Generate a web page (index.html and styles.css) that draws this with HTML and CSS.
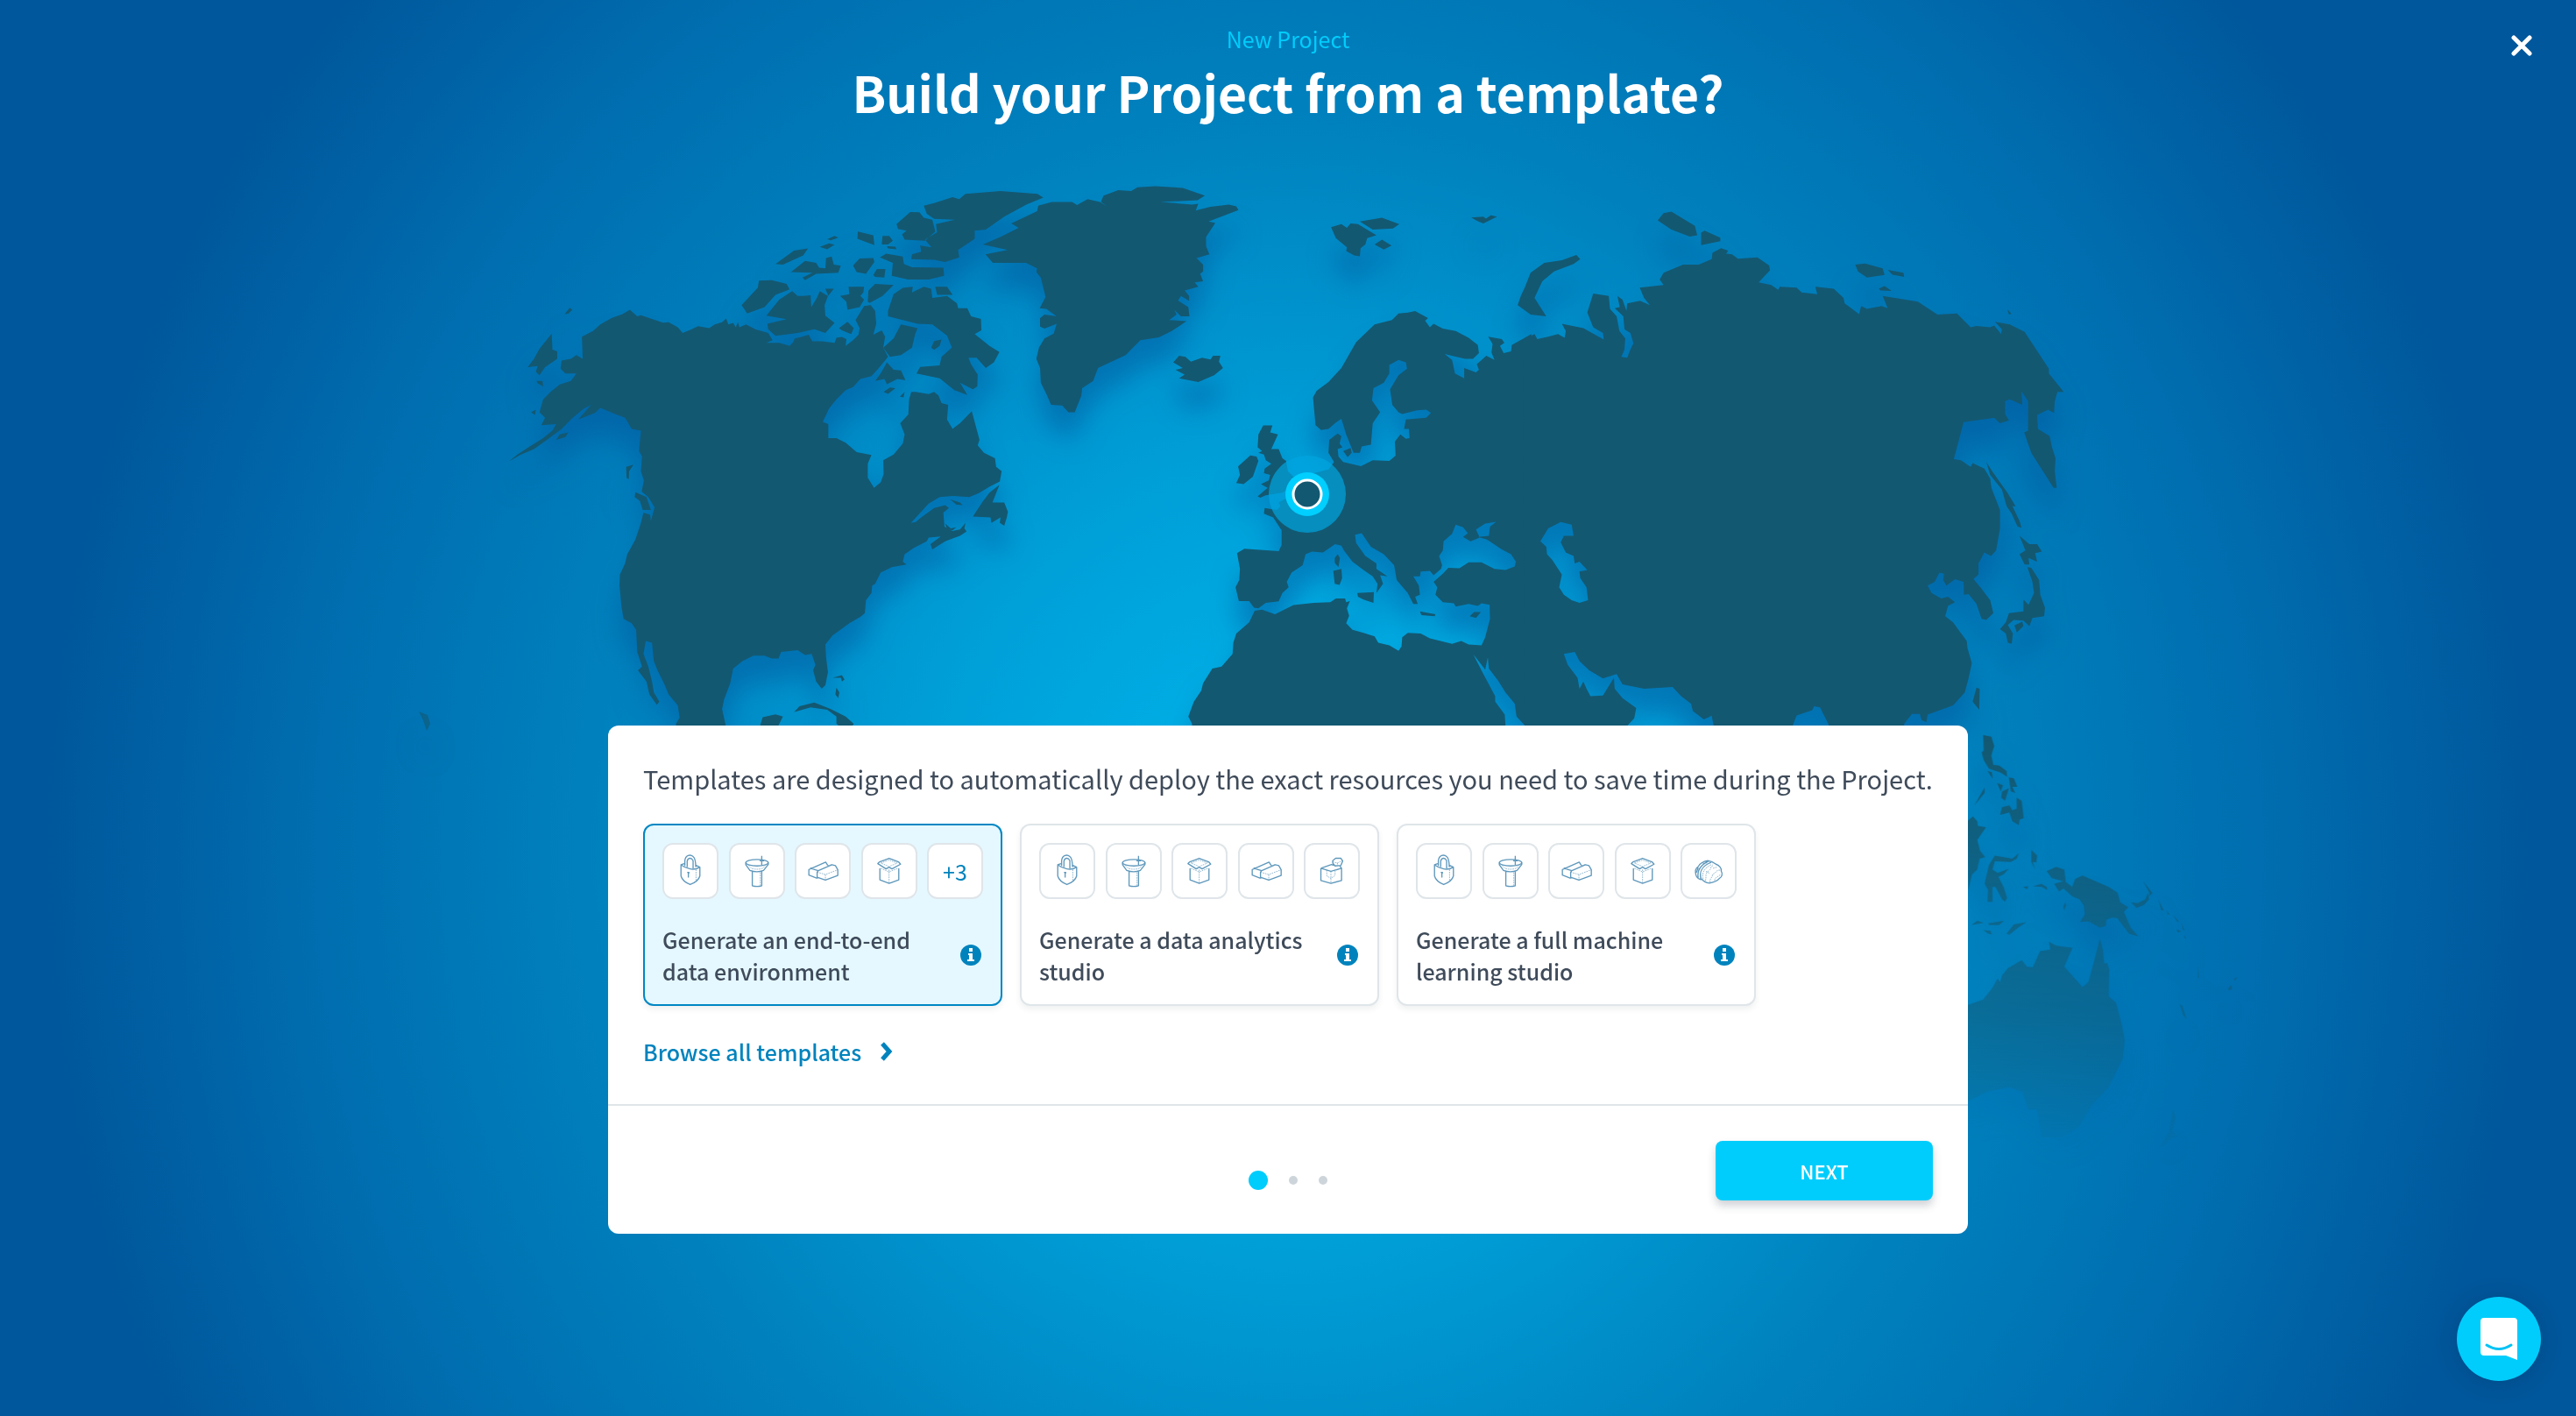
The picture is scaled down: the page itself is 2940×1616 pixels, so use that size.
FILE: index.html
```html
<!DOCTYPE html>
<html lang="en">
<head>
<meta charset="utf-8">
<meta name="viewport" content="width=device-width, initial-scale=1">
<title>New Project</title>
<link rel="stylesheet" href="styles.css">
</head>
<body>
<svg class="sprite" aria-hidden="true">
  <symbol id="i-lock" viewBox="0 0 190 190">
    <path d="M63 74V112Q68 130 94 141Q122 130 127 112V82Q110 92 94 88Q76 84 63 74L74 70M114 76L127 82M76 78V60C78 42 94 37 104 46C112 52 113 62 113 82M84 82V62C86 50 98 48 104 60V86M88 98V117M84 100L92 101"/>
    <path class="faint" d="M114 90V130"/>
  </symbol>
  <symbol id="i-funnel" viewBox="0 0 190 190">
    <ellipse cx="95" cy="67" rx="38" ry="11"/>
    <path d="M57 67V74L71 93Q95 102 117 93L133 73V67M79 97V145Q95 150 111 145V97M111 44V74M104 60H119"/>
    <path class="faint" d="M66 76L76 86Q95 92 114 86L124 76M106 100V144"/>
  </symbol>
  <symbol id="i-box" viewBox="0 0 190 190">
    <path d="M62 64L94 52L126 64L133 72L104 88L94 82L84 88L56 70L62 64M63 86V125L94 137L127 125V86"/>
    <path class="faint" d="M66 68L94 58L122 68L94 80L66 68M94 90V137M66 86L94 98L124 86"/>
  </symbol>
  <symbol id="i-bricks" viewBox="0 0 190 190">
    <path d="M76 120L48 109V90L105 65L112 76M76 120V99L80 94L126 74L138 77L146 91V110L104 126L76 116M80 94L52 86"/>
    <path class="faint" d="M76 99L104 107L146 91M104 107V126M112 76L126 74"/>
  </symbol>
  <symbol id="i-cube" viewBox="0 0 190 190">
    <path d="M58 86V127L92 137L128 127V86M58 86L94 73L102 76M58 86L92 96L128 86L122 78M98 60L108 52L126 52L132 61L126 76L106 78L98 68Z"/>
    <path class="faint" d="M92 96V137M78 92V112L92 120L106 110V90M98 64L114 68L130 60M114 68V76"/>
  </symbol>
  <symbol id="i-brain" viewBox="0 0 190 190">
    <path d="M52 108C48 94 54 84 60 80C66 68 82 62 92 60C102 62 112 66 120 72C132 76 140 86 138 96C144 104 140 116 132 120C124 130 110 134 98 136C86 134 78 130 74 124C64 124 54 118 52 108M60 118C56 96 66 76 94 62M70 124C62 100 72 78 104 66M76 70L90 66M54 100L60 84"/>
    <path class="faint" d="M76 122C72 100 80 84 108 72M84 128C90 112 80 104 96 94C106 88 98 80 112 76M100 134C98 118 110 118 108 106C122 104 116 92 134 92M116 128C114 116 128 116 136 106M86 96L100 104M110 86L124 82"/>
  </symbol>
  <symbol id="i-info" viewBox="0 0 24 24">
    <circle cx="12" cy="12" r="12"/>
    <path class="mark" d="M10 4h4v4h-4zM9 10h5v7h2v2H8v-2h2v-5H9z"/>
  </symbol>
</svg>

<svg class="map" viewBox="0 0 2940 1616" preserveAspectRatio="xMidYMid slice" aria-hidden="true">
  <defs>
    <linearGradient id="fade" gradientUnits="userSpaceOnUse" x1="0" y1="0" x2="0" y2="1616">
      <stop offset="0" stop-color="#fff"/>
      <stop offset=".52" stop-color="#fff"/>
      <stop offset=".64" stop-color="#aaa"/>
      <stop offset=".72" stop-color="#777"/>
      <stop offset=".83" stop-color="#000"/>
    </linearGradient>
    <mask id="fade-mask" maskUnits="userSpaceOnUse" x="0" y="0" width="2940" height="1616">
      <rect width="2940" height="1616" fill="url(#fade)"/>
    </mask>
    <filter id="drop" filterUnits="userSpaceOnUse" x="0" y="0" width="2940" height="1616" color-interpolation-filters="sRGB">
      <feDropShadow dx="0" dy="30" stdDeviation="14" flood-color="#02559c" flood-opacity=".5"/>
    </filter>
  </defs>
  <g mask="url(#fade-mask)">
  <g filter="url(#drop)" fill="#135871" fill-rule="evenodd">
    <!-- North America -->
    <g transform="translate(540 180) scale(.42092)">
      <path d="M295 485L325 470 345 452 375 435 405 424 425 412 445 430 455 427 485 437 515 447 530 446 555 460 568 475 590 466 610 457 640 462 655 452 675 446 686 436 692 452 705 448 712 460 718 446 722 460 740 452 765 465 800 475 812 495 795 502 830 502 858 510 868 500 872 490 890 486 910 480 915 490 920 498 945 498 980 502 985 488 1000 486 1012 492 1010 510 1030 495 1045 480 1048 462 1037 440 1060 402 1078 400 1090 415 1093 450 1085 480 1108 468 1117 485 1112 515 1125 540 1100 570 1080 592 1050 600 1030 622 1010 630 985 655 965 680 948 716 963 722 963 760 985 760 1010 773 1040 798 1080 806 1070 830 1070 868 1087 895 1105 880 1113 858 1112 820 1140 805 1165 775 1170 750 1158 720 1180 696 1182 655 1188 635 1200 635 1235 641 1250 635 1262 645 1270 665 1288 670 1285 710 1300 735 1320 720 1352 687 1365 735 1373 765 1368 780 1385 800 1415 815 1418 838 1433 850 1428 878 1400 892 1370 910 1345 920 1300 917 1265 920 1235 938 1210 965 1187 990 1200 988 1215 975 1250 950 1280 942 1290 950 1275 962 1278 1000 1300 1012 1320 1008 1335 990 1332 1005 1338 1013 1320 1025 1280 1040 1245 1062 1240 1048 1268 1027 1235 1030 1230 1040 1195 1058 1170 1075 1165 1095 1175 1103 1135 1110 1105 1125 1090 1155 1082 1160 1080 1180 1065 1200 1062 1235 1050 1245 1020 1262 975 1295 955 1320 957 1355 962 1395 955 1430 945 1440 930 1420 922 1390 928 1375 918 1345 900 1348 880 1335 835 1340 828 1358 810 1358 790 1350 760 1350 730 1365 705 1385 697 1425 680 1470 675 1495 685 1540 690 1640 555 1600 550 1535 560 1518 555 1485 530 1455 520 1430 500 1390 490 1365 485 1315 468 1310 462 1345 475 1380 485 1420 490 1450 505 1475 498 1483 478 1455 470 1420 447 1390 458 1380 445 1340 442 1280 430 1262 408 1250 402 1215 397 1160 398 1130 412 1100 418 1075 440 1035 455 990 462 962 480 968 482 985 492 948 475 920 457 905 463 875 455 850 458 810 450 795 455 740 430 735 412 705 385 695 345 678 330 692 285 710 320 670 300 680 270 705 240 735 200 765 165 790 130 805 97 823 120 805 150 785 190 760 215 740 225 722 185 725 195 705 180 690 190 655 210 635 235 615 265 605 280 585 250 585 237 572 240 550 265 545 280 535 297 545Z"/>
      <path d="M213 477L215 520 228 525 228 545 195 568 180 590 170 580 175 565 148 568 165 545 180 518ZM248 424L262 407 269 412 258 423ZM172 605L188 605 190 620 175 612ZM157 690L170 683 168 697ZM225 765L235 750 258 745 250 757ZM415 838L435 832 423 850 422 872 416 868ZM440 907L470 920 482 955 460 955 452 930 438 920Z"/>
      <path d="M728 400L772 352 775 333 810 332 850 342 858 357 820 372 790 405 743 422ZM795 428L830 385 865 362 880 375 895 375 915 373 917 405 932 380 940 362 962 375 953 400 955 428 980 448 955 475 925 465 880 475 820 483 800 465 798 450 850 438ZM820 288L870 252 908 246 895 265 840 290ZM862 310L900 280 930 285 938 298 955 300 957 272 972 268 978 290 997 293 990 312 930 315 900 332 893 325 920 312ZM940 242L965 232 980 236 960 248ZM960 221L980 212 990 217 970 224ZM955 355L978 355 963 374ZM995 375L1020 370 1018 350 1060 350 1058 365 1050 375 1060 385 1048 405 1015 412 1012 390ZM1030 292L1048 273 1085 272 1088 283 1065 315 1040 310ZM1043 200L1085 210 1088 237 1042 220ZM1110 212L1128 212 1138 225 1125 235 1108 235ZM1122 240L1145 241 1148 248 1125 246ZM1085 318L1095 302 1118 302 1115 325 1090 323ZM1103 270L1120 260 1165 268 1168 288 1190 297 1275 298 1277 320 1235 330 1180 330 1135 320 1138 285ZM1070 390L1072 360 1090 342 1140 345 1110 375 1075 394ZM992 462L1015 445 1032 462 1025 478 1000 468Z"/>
      <path d="M1125 415L1140 370 1165 353 1192 350 1190 365 1222 350 1242 355 1245 380 1285 375 1312 395 1315 408 1340 408 1350 430 1377 437 1378 468 1360 478 1400 510 1427 527 1412 555 1390 570 1365 542 1343 542 1350 560 1368 588 1367 620 1355 628 1320 610 1340 643 1305 630 1265 598 1202 585 1212 567 1265 563 1270 540 1298 515 1285 482 1245 452 1205 450 1125 430ZM1112 515L1140 490 1160 452 1205 462 1198 480 1190 515 1160 535 1130 540ZM1242 515L1250 497 1270 493 1265 510 1250 521ZM1090 605L1105 585 1122 555 1140 575 1160 577 1172 603 1150 600 1122 614 1115 600ZM1113 635L1130 623 1145 625 1125 640ZM1157 648L1170 635 1167 650ZM1253 350L1285 350 1300 372 1258 372Z"/>
      <path d="M1148 180L1185 147 1210 148 1222 163 1245 168 1253 200 1225 225 1170 222 1163 208 1175 198 1152 193ZM1222 130L1250 123 1300 107 1318 112 1335 98 1430 90 1530 98 1546 108 1500 127 1440 160 1390 195 1360 198 1360 220 1315 250 1318 270 1280 283 1250 277 1188 275 1190 262 1215 255 1212 238 1243 243 1225 222 1258 202 1255 180 1308 168 1250 166 1230 152Z"/>
      <path d="M1355 973L1380 935 1400 908 1427 887 1408 935 1440 935 1450 960 1447 975 1440 998 1428 990 1430 975 1405 990 1403 975ZM1293 926L1320 935 1327 942 1310 940ZM1280 992L1295 1005 1310 1002 1300 1010 1285 1007ZM870 1503L885 1487 925 1477 970 1495 1010 1515 1032 1535 1015 1560 985 1535 985 1515 960 1497 915 1490ZM778 1540L785 1517 820 1509 840 1515 825 1545ZM975 1410L1000 1403 1007 1415 1000 1420 997 1410ZM985 1437L993 1450 990 1465 982 1455Z"/>
    </g>
    <!-- Greenland, Europe and Africa -->
    <g transform="translate(1150 180) scale(.42092)">
      <path d="M10 178L80 145 83 130 120 120 175 120 188 128 217 112 250 120 270 132 253 120 260 103 300 88 335 90 352 80 400 77 475 82 535 103 515 115 415 120 500 127 517 125 510 143 550 133 600 127 620 132 626 142 545 173 563 177 538 215 538 240 547 262 512 272 530 290 530 308 522 315 530 335 507 338 517 350 480 360 492 375 492 388 470 375 462 387 490 405 493 430 470 430 452 412 458 425 438 440 485 443 445 470 410 487 360 495 320 535 245 570 232 605 202 625 200 645 182 690 165 690 148 672 118 670 105 640 90 610 88 570 78 545 85 515 100 490 125 477 133 450 100 463 88 458 88 435 100 425 133 430 105 410 87 408 103 378 90 325 78 310 80 300 50 285 0 285 -40 285 -60 262 0 250 -67 235 -20 215 30 190Z"/>
      <path d="M449 555L465 537 482 540 497 553 527 542 550 547 557 537 577 537 573 553 584 570 560 590 517 608 465 598 480 588 455 575 475 570ZM877 188L905 180 920 190 930 178 950 180 1000 210 975 218 970 235 957 245 955 267 940 265 918 253 920 243 890 218ZM955 173L1015 163 1062 180 1045 192 990 195ZM995 235L1015 222 1041 238 1020 249ZM1257 162L1290 160 1297 165 1310 156 1327 160 1290 178 1275 172Z"/>
      <path d="M693 726L718 726 712 745 733 750 715 790 735 790 745 815 755 822 760 850 780 870 775 890 745 908 700 915 685 922 678 918 705 895 687 885 708 875 712 860 695 855 697 843 715 830 700 820 695 805 680 800 690 795 678 785 680 750ZM625 837L658 807 675 810 680 822 665 865 640 885 620 882 630 860ZM887 1085L895 1075 901 1085 897 1110 887 1098ZM883 1120L905 1115 907 1140 900 1158 887 1155ZM948 1180L993 1178 992 1207 965 1198 950 1190ZM1118 1230L1160 1238 1158 1243 1122 1240ZM1253 1243L1265 1232 1283 1232 1270 1248ZM910 795L930 787 933 800 922 812Z"/>
      <path d="M828 650L838 632 870 608 905 570 945 500 995 452 1042 440 1060 422 1085 420 1105 416 1140 435 1132 442 1145 460 1155 450 1180 463 1215 470 1250 488 1275 508 1278 530 1262 545 1240 545 1185 532 1205 548 1213 585 1238 598 1238 570 1270 582 1278 575 1272 560 1298 537 1320 548 1312 528 1315 505 1303 485 1340 492 1347 502 1335 510 1345 530 1365 525 1367 508 1420 478V1640H1403V1540L1380 1515 1375 1480 1350 1450 1330 1418 1305 1385 1302 1355 1295 1388 1263 1347 1290 1400 1322 1460 1322 1475 1348 1510 1350 1540V1640H500L500 1535 490 1515 505 1475 525 1445 530 1425 555 1385 580 1380 610 1345 612 1315 620 1290 655 1260 670 1228 690 1225 725 1238 775 1213 830 1207 875 1205 890 1195 915 1195 918 1205 928 1202 920 1222 926 1242 918 1262 935 1280 965 1288 995 1298 1005 1315 1035 1322 1060 1337 1068 1325 1070 1300 1085 1288 1120 1290 1145 1303 1205 1318 1230 1310 1250 1320 1285 1322 1295 1300 1308 1250 1307 1212 1285 1208 1275 1215 1250 1210 1215 1217 1210 1208 1180 1205 1160 1185 1165 1165 1155 1150 1180 1128 1195 1112 1225 1113 1250 1097 1285 1097 1320 1115 1350 1118 1375 1108 1378 1095 1365 1075 1340 1062 1300 1035 1275 1028 1305 1025 1308 1000 1325 987 1295 992 1270 1008 1280 1030 1255 1040 1235 1028 1248 1018 1235 1002 1215 995 1205 1020 1182 1040 1180 1065 1170 1080 1178 1105 1175 1115 1155 1132 1145 1120 1120 1122 1118 1135 1100 1135 1115 1160 1118 1185 1105 1190 1112 1210 1100 1210 1085 1180 1055 1145 1048 1105 1020 1075 985 1055 960 1018 942 1022 945 1045 970 1080 1000 1100 1000 1115 1030 1135 1010 1132 1018 1155 1000 1180 1003 1155 990 1135 965 1118 935 1095 912 1065 905 1052 888 1048 855 1070 825 1068 808 1075 800 1105 770 1125 757 1150 762 1165 745 1180 735 1203 700 1207 680 1222 668 1220 655 1202 627 1202 618 1165 628 1145 630 1115 622 1072 642 1060 735 1067 743 1050 743 1010 720 975 695 965 697 950 730 955 740 945 735 935 770 915 790 885 830 855 870 845 885 825 870 800 872 765 895 748 905 755 900 775 908 785 895 790 897 810 910 825 930 830 958 836 990 820 1035 822 1052 808 1050 770 1065 750 1080 762 1090 760 1088 735 1075 735 1080 710 1135 705 1148 692 1135 683 1110 685 1070 695 1060 690 1043 670 1037 628 1060 590 1083 572 1080 555 1060 548 1035 562 1035 585 1020 610 992 625 988 658 1010 690 990 720 985 778 960 783 955 800 938 800 918 750 905 708 890 718 870 735 850 738 835 725Z"/>
    </g>
    <!-- Asia -->
    <g transform="translate(1700 180) scale(.44643 .42092)">
      <path d="M85 495L115 478 122 492 150 485 175 478 192 488 195 470 185 450 240 462 292 493 290 475 265 460 250 420 265 368 305 375 308 410 325 430 332 470 347 490 345 520 337 540 352 542 360 520 368 503 360 475 345 465 342 430 320 408 333 405 327 375 340 385 350 415 352 395 385 388 410 400 395 380 384 352 445 345 435 330 445 312 495 290 535 290 568 275 570 258 592 245 610 252 605 260 620 262 635 274 685 270 715 292 717 305 688 338 720 345 738 358 742 350 785 352 798 365 838 370 833 350 880 355 905 380 908 395 945 424 950 402 965 410 1002 402 1018 408 1005 375 1095 390 1145 425 1195 422 1230 460 1245 456 1280 460 1290 455 1308 478 1310 465 1292 445 1330 452 1368 472 1430 572 1430 585 1468 635 1452 635 1445 660 1443 692 1428 683 1400 697 1402 735 1432 755 1438 785 1447 815 1445 850 1450 895 1442 895 1385 800 1367 745 1377 740 1377 660 1360 633 1362 670 1330 655 1318 660 1318 695 1328 712 1305 720 1290 705 1260 710 1212 717 1187 817 1205 820 1230 838 1235 828 1265 843 1280 870 1283 895 1305 955 1305 1005 1295 1065 1282 1080 1265 1070 1250 1100 1250 1130 1237 1142 1255 1165 1280 1200 1288 1235 1270 1253 1258 1250 1245 1210 1225 1183 1213 1185 1212 1150 1190 1143 1168 1160 1160 1145 1162 1128 1150 1125 1138 1150 1120 1160 1130 1180 1155 1195 1172 1190 1190 1205 1172 1215 1165 1243 1185 1260 1220 1310 1222 1330 1233 1370 1225 1410 1215 1450 1185 1485 1120 1510 1117 1530 1105 1525 1100 1508 1080 1508 1060 1535V1640H865L867 1537 845 1490 830 1487 825 1498 785 1512 775 1540V1640H573V1540L568 1513 548 1523 520 1500 515 1480 490 1460 468 1435 395 1440 340 1428 325 1400 290 1412 255 1390 230 1365 218 1340 190 1345 200 1375 225 1410 230 1440 240 1420 248 1440 258 1460 290 1458 318 1410 320 1440 340 1465 375 1492 370 1520 352 1540V1640H90ZM182 988L210 995 215 1025 190 1025 182 1043 195 1070 215 1080 218 1100 230 1095 250 1118 230 1122 232 1140 248 1165 252 1200 230 1207 210 1200 190 1185 178 1165 185 1130 160 1090 147 1075 145 1055 130 1040 150 1005Z"/>
      <path d="M72 400L80 375 90 352 105 312 140 285 185 278 222 264 232 275 215 288 165 308 135 335 115 380 145 430 105 425ZM430 170L445 150 465 146 525 185 531 210 512 214 465 195ZM541 203L550 198 590 217 590 226 541 237ZM935 290L960 287 1005 300 1010 318 965 325 942 308ZM1018 304L1058 312 1060 323 1030 317ZM995 355L1010 348 1028 361 1000 360ZM1324 411L1334 423 1328 425ZM1270 825L1285 850 1325 910 1345 945 1337 945 1355 985 1360 1003 1350 1000 1335 965 1322 945 1310 900 1280 860ZM1355 1025L1380 1048 1400 1048 1412 1068 1395 1072 1400 1095 1378 1085 1380 1103 1368 1103 1355 1075 1370 1065ZM1375 1110L1385 1112 1405 1145 1408 1185 1420 1220 1418 1243 1388 1248 1380 1270 1365 1255 1340 1253 1325 1267 1338 1290 1335 1318 1325 1315 1320 1290 1305 1278 1320 1260 1328 1235 1365 1230 1365 1198 1378 1212 1392 1180 1388 1150ZM1342 1268L1362 1258 1365 1270 1348 1287ZM1245 1437L1253 1440 1252 1497 1235 1475Z"/>
    </g>
    <!-- South-east Asia and Oceania -->
    <g transform="translate(2100 780) scale(.33333 .35714)">
      <path d="M490 165L518 170 528 200 518 230 525 260 545 262 570 280 572 298 550 285 510 272 492 245 485 220 492 215ZM505 280L520 283 523 305ZM578 300L595 303 607 330 590 330 600 350 585 345ZM538 318L558 325 550 345ZM555 345L578 335 565 375 552 365ZM495 332L495 350 460 390ZM548 420L555 395 580 390 590 405 605 400 605 365 622 375 629 430 615 435 612 453 590 440 580 412ZM435 440L455 425 470 440 472 455 500 460 470 500 480 535 497 555 478 560 470 595 452 610 440 660ZM530 550L590 560 612 542 605 560 585 570 530 568 522 595 540 605 578 592 560 610 542 618 560 650 572 685 565 698 555 690 532 650 522 650 522 698 505 698 507 660 495 640 510 580ZM655 532L675 550 672 572 660 570 668 595 655 570ZM627 650L645 648 640 658ZM660 648L690 640 708 650 710 660 690 650ZM450 772L470 758 492 765ZM508 766L562 758 545 772 510 772ZM490 788L515 790 520 802 508 800ZM570 800L595 770 638 763 610 780 580 803ZM765 712L772 700 774 710 767 725Z"/>
      <path d="M708 600L740 586 768 595 773 635 795 650 805 625 830 614 870 630 920 650 950 668 960 700 987 715 972 730 995 780 1022 808 990 800 965 770 950 750 930 748 912 755 910 775 890 780 850 760 822 762 838 738 835 710 820 690 795 680 765 655 750 665 733 640 765 632 725 622ZM1038 632L1070 670 1058 680 1060 670ZM997 700L1020 702 1045 690 1055 668 1058 690 1040 708 1015 717ZM1090 690L1108 725 1100 725ZM1118 725L1128 738 1122 738ZM1140 738L1160 760 1155 762ZM1168 762L1180 790 1174 788ZM1152 785L1168 792 1157 796ZM1178 805L1186 814 1180 814ZM1226 900L1229 942 1225 940ZM1328 975L1340 963 1342 978 1330 980ZM1348 945L1362 938 1352 950ZM1163 1025L1172 1030 1187 1072 1175 1060ZM1140 1362L1150 1385 1138 1430 1155 1445 1135 1455 1105 1480 1095 1480 1125 1435Z"/>
      <path d="M400 1040L490 1010 520 975 540 943 548 955 555 932 575 910 622 884 640 905 660 907 685 855 720 850 715 825 740 838 796 845 768 905 830 970 850 955 865 905 890 816 900 850 905 895 915 893 922 915 920 1000 945 1020 965 1090 975 1140 968 1200 920 1290 860 1350 815 1420 760 1450 690 1450 675 1360 645 1362 625 1305 580 1290 500 1305 440 1335 400 1340Z"/>
    </g>
    <path d="M478 812L488 816 491 826 487 834 483 822Z" opacity=".6"/>
  </g>
  </g>
  <circle cx="1492" cy="564" r="44" fill="#00a5e0" fill-opacity=".7"/>
  <circle cx="1492" cy="564" r="25" fill="#00cfff"/>
  <circle cx="1492" cy="564" r="16" fill="#135871" stroke="#fff" stroke-width="3"/>
</svg>

<main class="wizard">
  <header class="heading">
    <p class="eyebrow">New Project</p>
    <h1>Build your Project from a template?</h1>
  </header>

  <form class="card">
    <div class="card-body">
      <p class="intro">Templates are designed to automatically deploy the exact resources you need to save time during the Project.</p>
      <div class="templates">
        <label class="template">
          <input type="radio" name="template" checked>
          <span class="tiles">
            <span class="tile"><svg><use href="#i-lock"/></svg></span>
            <span class="tile"><svg><use href="#i-funnel"/></svg></span>
            <span class="tile"><svg><use href="#i-bricks"/></svg></span>
            <span class="tile"><svg><use href="#i-box"/></svg></span>
            <span class="tile">+3</span>
          </span>
          <span class="caption"><span>Generate an end-to-end data environment</span><svg class="info"><use href="#i-info"/></svg></span>
        </label>
        <label class="template">
          <input type="radio" name="template">
          <span class="tiles">
            <span class="tile"><svg><use href="#i-lock"/></svg></span>
            <span class="tile"><svg><use href="#i-funnel"/></svg></span>
            <span class="tile"><svg><use href="#i-box"/></svg></span>
            <span class="tile"><svg><use href="#i-bricks"/></svg></span>
            <span class="tile"><svg><use href="#i-cube"/></svg></span>
          </span>
          <span class="caption"><span>Generate a data analytics studio</span><svg class="info"><use href="#i-info"/></svg></span>
        </label>
        <label class="template">
          <input type="radio" name="template">
          <span class="tiles">
            <span class="tile"><svg><use href="#i-lock"/></svg></span>
            <span class="tile"><svg><use href="#i-funnel"/></svg></span>
            <span class="tile"><svg><use href="#i-bricks"/></svg></span>
            <span class="tile"><svg><use href="#i-box"/></svg></span>
            <span class="tile"><svg><use href="#i-brain"/></svg></span>
          </span>
          <span class="caption"><span>Generate a full machine learning studio</span><svg class="info"><use href="#i-info"/></svg></span>
        </label>
      </div>
      <a class="browse" href="#">Browse all templates
        <svg viewBox="0 0 16 24"><path d="M4 3L12 12L4 21"/></svg>
      </a>
    </div>
    <footer class="card-footer">
      <div class="steps"><span class="step current"></span><span class="step"></span><span class="step"></span></div>
      <button class="next" type="button">NEXT</button>
    </footer>
  </form>
</main>

<button class="close" type="button" aria-label="Close"><svg viewBox="0 0 24 24"><path d="M3 3L21 21M21 3L3 21"/></svg></button>
<button class="chat" type="button" aria-label="Open chat">
  <svg viewBox="0 0 42 48"><path fill="#fff" d="M4 0H38Q42 0 42 4V48L29 43H4Q0 43 0 39V4Q0 0 4 0Z"/><path class="smile" d="M7 31Q21 40 35 31"/></svg>
</button>
</body>
</html>
```

FILE: styles.css
```css
* { box-sizing: border-box; }

body {
  margin: 0;
  color: #3f4b5a;
  background: #00579b radial-gradient(ellipse 1420px 1500px at 50% 60%, #00b6ec 0%, #009fd8 30%, #0082be 55%, #006eb0 78%, #00579b 100%);
  font-family: "Noto Sans CJK JP", "Noto Sans", sans-serif;
}

.sprite { position: absolute; width: 0; height: 0; }

.map {
  position: absolute;
  inset: 0;
  width: 100%;
  height: 100%;
}

.wizard {
  position: relative;
  display: flex;
  flex-direction: column;
  align-items: center;
  justify-content: space-between;
  min-height: 100vh;
  padding: 24px 24px 208px;
}

.heading { text-align: center; }

.eyebrow {
  margin: 0;
  color: #00cdfc;
  font-size: 25px;
  font-weight: 400;
  line-height: 40px;
}

h1 {
  margin: 0;
  color: #fff;
  font-size: 57px;
  font-weight: 700;
  line-height: 80px;
}

.card {
  width: 100%;
  max-width: 1552px;
  border-radius: 12px;
  background: #fff;
}

.card-body {
  display: flex;
  flex-direction: column;
  align-items: flex-start;
  padding: 40px;
}

.intro {
  margin: 0 0 32px;
  font-size: 29px;
  line-height: 40px;
}

.templates {
  display: flex;
  flex-wrap: wrap;
  gap: 20px;
  margin-bottom: 32px;
}

.template {
  display: flex;
  flex-direction: column;
  justify-content: space-between;
  width: 410px;
  min-height: 208px;
  padding: 20px;
  border: 2px solid #dfe5e9;
  border-radius: 12px;
  background: #fff;
  box-shadow: 0 4px 6px rgba(63, 75, 90, .08);
  cursor: pointer;
}

.template:has(input:checked) {
  border-color: #0087c3;
  background: #e5f8ff;
}

.template input {
  position: absolute;
  margin: 0;
  opacity: 0;
}

.tiles { display: flex; justify-content: space-between; }

.tile {
  display: flex;
  align-items: center;
  justify-content: center;
  width: 64px;
  height: 64px;
  border: 2px solid #dfe5e9;
  border-radius: 12px;
  background: #fff;
  color: #0083bd;
  font-size: 25px;
  line-height: 40px;
}

.tile svg {
  flex: none;
  width: 64px;
  height: 64px;
  fill: none;
  stroke: #5f98bc;
  stroke-width: 4;
  stroke-linejoin: round;
}

.faint { stroke-width: 2; stroke-dasharray: 5 3; }

.caption {
  display: flex;
  align-items: center;
  gap: 24px;
  font-size: 25px;
  font-weight: 500;
  line-height: 36px;
}

.caption > span { flex: 1; }

.info {
  flex: none;
  width: 24px;
  height: 24px;
  margin-right: 2px;
  fill: #0083bd;
}

.mark { fill: #fff; }

.browse {
  display: flex;
  align-items: center;
  gap: 20px;
  color: #0083bd;
  font-size: 25px;
  font-weight: 500;
  line-height: 40px;
  text-decoration: none;
}

.browse svg {
  width: 16px;
  height: 24px;
  fill: none;
  stroke: currentColor;
  stroke-width: 5;
}

.card-footer {
  display: grid;
  grid-template-columns: 1fr auto 1fr;
  align-items: end;
  padding: 40px 40px 38px;
  border-top: 2px solid #dfe5e9;
}

.steps {
  display: flex;
  grid-column: 2;
  align-items: center;
  gap: 24px;
  padding-bottom: 12px;
}

.step {
  width: 10px;
  height: 10px;
  border-radius: 50%;
  background: #cdd5db;
}

.step.current { width: 22px; height: 22px; background: #00cdfc; }

.next {
  justify-self: end;
  width: 248px;
  height: 68px;
  border: 0;
  border-radius: 8px;
  background: #00cdfc;
  box-shadow: 0 6px 10px rgba(63, 75, 90, .25);
  color: #fff;
  font: 500 22px/40px "Noto Sans CJK JP", "Noto Sans", sans-serif;
}

.close {
  position: absolute;
  top: 32px;
  right: 42px;
  width: 40px;
  height: 40px;
  padding: 8px;
  border: 0;
  background: none;
}

.close svg {
  display: block;
  fill: none;
  stroke: #fff;
  stroke-width: 5;
  stroke-linecap: round;
}

.chat {
  position: fixed;
  right: 40px;
  bottom: 40px;
  display: flex;
  align-items: center;
  justify-content: center;
  width: 96px;
  height: 96px;
  border: 0;
  border-radius: 50%;
  background: #00cdfc;
  box-shadow: 0 2px 24px rgba(0, 40, 80, .25);
}

.chat svg { width: 42px; height: 48px; }

.smile {
  fill: none;
  stroke: #00c3f5;
  stroke-width: 3;
  stroke-linecap: round;
}
```
